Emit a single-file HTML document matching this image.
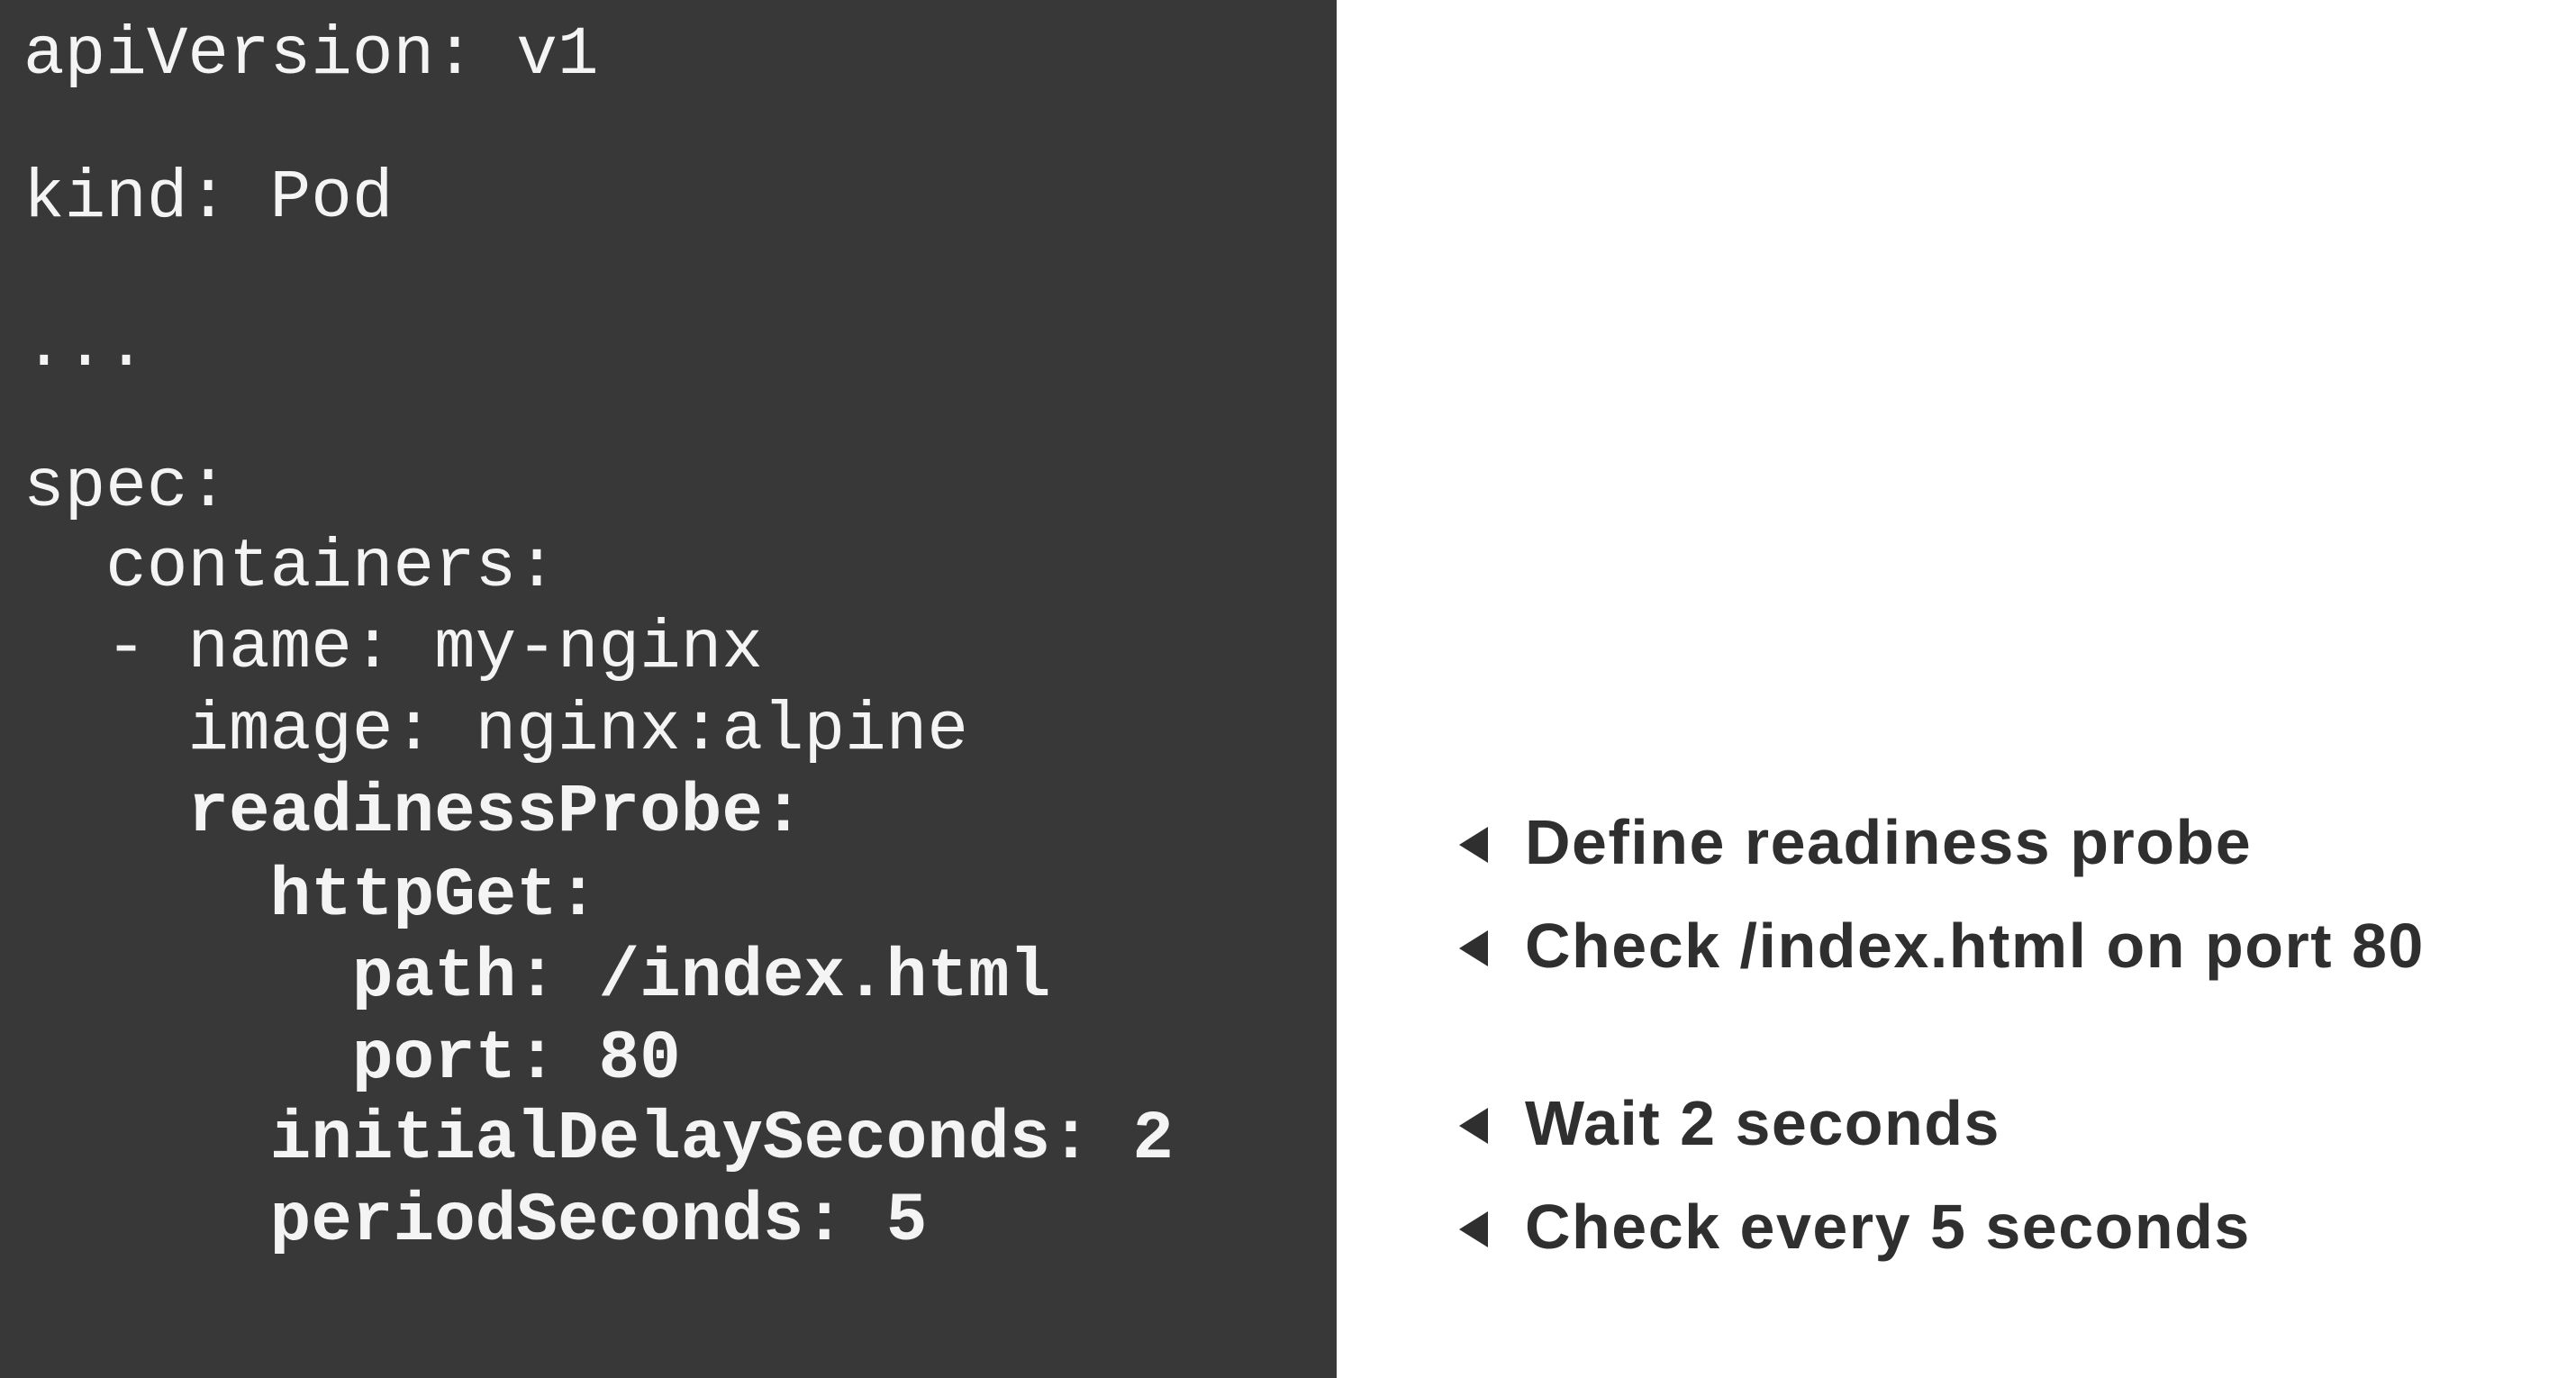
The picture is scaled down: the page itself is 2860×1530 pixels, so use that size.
<!DOCTYPE html>
<html><head><meta charset="utf-8"><style>
html,body{margin:0;padding:0;width:2860px;height:1530px;overflow:hidden;background:#fff}
.panel{position:absolute;left:0;top:0;width:1484px;height:1530px;background:#383838}
.c{position:absolute;left:26px;font-family:"Liberation Mono",monospace;font-size:76px;line-height:90px;height:90px;color:#f4f4f4;white-space:pre}
.b{font-weight:bold}
.r{position:absolute;left:1693px;font-family:"Liberation Sans",sans-serif;font-weight:bold;font-size:70px;line-height:90px;height:90px;color:#2f2f2f;white-space:pre;letter-spacing:1.5px}
.t{position:absolute;left:1620px;width:0;height:0;border-top:20px solid transparent;border-bottom:20px solid transparent;border-right:32px solid #2f2f2f}
</style></head><body>
<div class="panel"></div>
<div class="c" style="top:16px">apiVersion: v1</div>
<div class="c" style="top:175px">kind: Pod</div>
<div class="c" style="top:340px">...</div>
<div class="c" style="top:496px">spec:</div>
<div class="c" style="top:585px">  containers:</div>
<div class="c" style="top:675px">  - name: my-nginx</div>
<div class="c" style="top:766px">    image: nginx:alpine</div>
<div class="c b" style="top:857px">    readinessProbe:</div>
<div class="c b" style="top:950px">      httpGet:</div>
<div class="c b" style="top:1040px">        path: /index.html</div>
<div class="c b" style="top:1131px">        port: 80</div>
<div class="c b" style="top:1220px">      initialDelaySeconds: 2</div>
<div class="c b" style="top:1311px">      periodSeconds: 5</div>

<div class="t" style="top:918px"></div><div class="r" style="top:890px">Define readiness probe</div>
<div class="t" style="top:1033px"></div><div class="r" style="top:1005px">Check /index.html on port 80</div>
<div class="t" style="top:1230px"></div><div class="r" style="top:1202px">Wait 2 seconds</div>
<div class="t" style="top:1345px"></div><div class="r" style="top:1317px">Check every 5 seconds</div>
</body></html>
